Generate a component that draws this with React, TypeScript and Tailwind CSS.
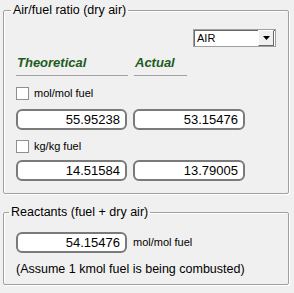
import React from "react";

const fieldBox =
  "h-[21px] rounded-[6px] border-2 border-[#7a7a7a] bg-white flex items-center justify-end pr-[5px] text-[13px] leading-none text-black";

function Check({ label }: { label: string }) {
  return (
    <div className="flex items-center gap-[5px] h-[13px]">
      <div className="w-[13px] h-[13px] border border-[#8f8f8f] bg-white" />
      <span className="text-[11px] leading-none text-black">{label}</span>
    </div>
  );
}

function Field({ value, className = "" }: { value: string; className?: string }) {
  return <div className={`${fieldBox} ${className}`}>{value}</div>;
}

export default function App() {
  return (
    <div className="w-[294px] h-[293px] bg-[#f0f0f0] pt-[3px] px-[3px] font-['Liberation_Sans',Arial,sans-serif] text-black">
      {/* Air/fuel ratio group */}
      <fieldset className="w-[286px] h-[191px] border border-[#a0a0a0] rounded-[2px] shadow-[inset_1px_1px_0_#fff,1px_1px_0_#fff]">
        <legend className="ml-[7px] px-[2px] text-[12.5px] leading-[15px]">Air/fuel ratio (dry air)</legend>
        <div className="pl-[12px]">
          <div className="flex justify-end pr-[12px] mt-[11px]">
            <div className="w-[83px] h-[18px] bg-white border border-[#a0a0a0] flex items-center shadow-[inset_1px_1px_0_#696969]">
              <span className="flex-1 pl-[3px] text-[11px] leading-none">AIR</span>
              <div className="w-[16px] h-[16px] mr-[1px] bg-[#f0f0f0] border border-[#fff] border-r-[#696969] border-b-[#696969] flex items-center justify-center">
                <svg width="7" height="4" viewBox="0 0 7 4">
                  <path d="M0 0h7L3.5 4z" fill="#000" />
                </svg>
              </div>
            </div>
          </div>

          <div className="flex gap-[6px] mt-[8px]">
            <div className="w-[112px] pl-[1px] pb-[5px] border-b border-[#a0a0a0] text-[13px] leading-[15px] font-bold italic text-[#1e5b1e]">
              Theoretical
            </div>
            <div className="w-[53px] pl-[1px] pb-[5px] border-b border-[#a0a0a0] text-[13px] leading-[15px] font-bold italic text-[#1e5b1e]">
              Actual
            </div>
          </div>

          <div className="mt-[11px]">
            <Check label="mol/mol fuel" />
          </div>
          <div className="flex gap-[6px] mt-[9px]">
            <Field value="55.95238" className="w-[111px]" />
            <Field value="53.15476" className="w-[112px]" />
          </div>

          <div className="mt-[10px]">
            <Check label="kg/kg fuel" />
          </div>
          <div className="flex gap-[6px] mt-[7px]">
            <Field value="14.51584" className="w-[111px]" />
            <Field value="13.79005" className="w-[112px]" />
          </div>
        </div>
      </fieldset>

      {/* Reactants group */}
      <fieldset className="w-[286px] h-[80px] mt-[11px] border border-[#a0a0a0] rounded-[2px] shadow-[inset_1px_1px_0_#fff,1px_1px_0_#fff]">
        <legend className="ml-[5px] px-[2px] text-[12.5px] leading-[15px]">Reactants (fuel + dry air)</legend>
        <div className="pl-[12px]">
          <div className="flex items-center gap-[6px] mt-[12px]">
            <Field value="54.15476" className="w-[111px]" />
            <span className="text-[11px] leading-none">mol/mol fuel</span>
          </div>
          <div className="mt-[9px] text-[12.5px] leading-[15px]">
            (Assume 1 kmol fuel is being combusted)
          </div>
        </div>
      </fieldset>
    </div>
  );
}
